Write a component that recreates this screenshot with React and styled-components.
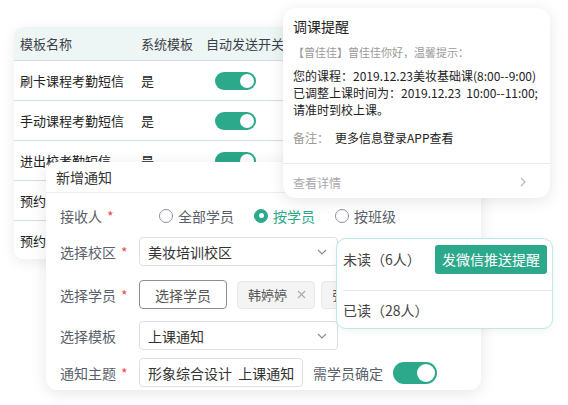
import React from "react";
import styled, { createGlobalStyle } from "styled-components";

const GREEN = "#2ca88a";

const Global = createGlobalStyle`
  html, body { margin: 0; padding: 0; background: #fff; }
  body { font-family: "Noto Sans CJK SC", "Noto Sans", sans-serif; color: #333; }
  * { box-sizing: border-box; }
`;

const Stage = styled.div`
  position: relative;
  width: 568px;
  height: 405px;
  overflow: hidden;
  background: #fff;
`;

/* ---------- template table card ---------- */
const TableCard = styled.div`
  position: absolute;
  left: 14px;
  top: 27px;
  width: 300px;
  border-radius: 9px;
  background: #fff;
  overflow: hidden;
  box-shadow: 0 3px 14px rgba(0, 0, 0, 0.08);
`;

const TRow = styled.div`
  display: grid;
  grid-template-columns: 121px 65px 1fr;
  align-items: center;
  padding-left: 6px;
  height: ${(p) => (p.$head ? 34 : p.$last ? 38 : 40)}px;
  background: ${(p) => (p.$head ? "#eef6f5" : "#fff")};
  border-bottom: ${(p) => (p.$last ? "none" : "1px solid #d6ddea")};
  font-size: 13px;
  color: ${(p) => (p.$head ? "#3a3f4a" : "#222")};
  white-space: nowrap;
`;

const Cell = styled.div`
  overflow: visible;
`;

const Switch = styled.div`
  position: relative;
  width: ${(p) => (p.$big ? 44 : 41)}px;
  height: ${(p) => (p.$big ? 22 : 18)}px;
  border-radius: 12px;
  background: ${GREEN};
  margin-left: ${(p) => p.$ml || 0}px;
  flex: none;
  &::after {
    content: "";
    position: absolute;
    top: 2px;
    right: 2px;
    width: ${(p) => (p.$big ? 18 : 14)}px;
    height: ${(p) => (p.$big ? 18 : 14)}px;
    border-radius: 50%;
    background: #fff;
  }
`;

/* ---------- notice card ---------- */
const NoticeCard = styled.div`
  position: absolute;
  left: 283px;
  top: 8px;
  width: 267px;
  height: 190px;
  border-radius: 13px;
  background: #fff;
  box-shadow: 0 3px 16px rgba(0, 0, 0, 0.1);
  display: flex;
  flex-direction: column;
  z-index: 2;
`;

const NoticeBody = styled.div`
  padding: 8px 10px 0;
  height: 155px;
`;

const NoticeTitle = styled.div`
  font-size: 14px;
  line-height: 20px;
  color: #222;
`;

const Greeting = styled.div`
  margin-top: 8px;
  font-size: 11px;
  line-height: 17px;
  color: #9a9a9a;
  white-space: nowrap;
`;

const Message = styled.div`
  margin-top: 6px;
  font-size: 12px;
  line-height: 17px;
  color: #222;
  white-space: pre;
`;

const Remark = styled.div`
  margin-top: 11px;
  display: flex;
  font-size: 12px;
  line-height: 17px;
  color: #222;
`;

const RemarkLabel = styled.span`
  color: #9a9a9a;
  width: 42px;
`;

const NoticeFooter = styled.div`
  flex: 1;
  border-top: 1px solid #ececec;
  display: flex;
  align-items: center;
  justify-content: space-between;
  padding: 2px 24px 0 10px;
  font-size: 12px;
  color: #a8a8a8;
`;

/* ---------- new notification card ---------- */
const FormCard = styled.div`
  position: absolute;
  left: 46px;
  top: 162px;
  width: 435px;
  height: 228px;
  border-radius: 11px;
  background: #fff;
  box-shadow: 0 3px 16px rgba(0, 0, 0, 0.1);
  z-index: 1;
`;

const FormHeader = styled.div`
  height: 31px;
  padding: 0 10px;
  display: flex;
  align-items: center;
  font-size: 14px;
  color: #333;
  border-bottom: 1px solid #eeeeee;
`;

const FormBody = styled.div`
  padding: 8px 0 0 14px;
`;

const FormRow = styled.div`
  display: flex;
  align-items: center;
  height: 29px;
  margin-top: ${(p) => p.$mt || 0}px;
  font-size: 14px;
  white-space: nowrap;
`;

const Label = styled.div`
  width: 79px;
  flex: none;
  display: flex;
  gap: 5px;
  color: #5a5f6b;
`;

const Req = styled.span`
  color: #f04b4b;
`;

const RadioGroup = styled.div`
  display: flex;
  gap: 20px;
  margin-left: 20px;
`;

const RadioItem = styled.label`
  display: flex;
  align-items: center;
  gap: 5px;
  color: ${(p) => (p.$on ? GREEN : "#5a5f6b")};
`;

const RadioDot = styled.span`
  width: 14px;
  height: 14px;
  border-radius: 50%;
  border: 1px solid ${(p) => (p.$on ? GREEN : "#8a8f99")};
  background: ${(p) => (p.$on ? GREEN : "#fff")};
  display: flex;
  align-items: center;
  justify-content: center;
  &::after {
    content: "";
    width: 5px;
    height: 5px;
    border-radius: 50%;
    background: ${(p) => (p.$on ? "#fff" : "transparent")};
  }
`;

const Select = styled.div`
  width: 199px;
  height: 29px;
  border: 1px solid #dcdfe6;
  border-radius: 4px;
  padding: 0 10px 0 8px;
  display: flex;
  align-items: center;
  justify-content: space-between;
  color: #333;
`;

const OutlineButton = styled.div`
  width: 88px;
  height: 29px;
  border: 1px solid #8d8d8d;
  border-radius: 4px;
  display: flex;
  align-items: center;
  justify-content: center;
  color: #555;
`;

const Tag = styled.div`
  height: 28px;
  margin-left: ${(p) => p.$ml}px;
  padding: 0 8px 0 10px;
  display: flex;
  align-items: center;
  gap: 10px;
  background: #f4f4f5;
  border: 1px solid #e9e9eb;
  border-radius: 4px;
  font-size: 13px;
  color: #555;
`;

const Input = styled.div`
  width: 164px;
  height: 29px;
  border: 1px solid #dcdfe6;
  border-radius: 4px;
  padding: 0 8px;
  display: flex;
  align-items: center;
  color: #333;
  overflow: hidden;
  white-space: pre;
`;

const InlineText = styled.span`
  margin: 0 10px;
  color: #5a5f6b;
`;

/* ---------- read stats card ---------- */
const StatsCard = styled.div`
  position: absolute;
  left: 336px;
  top: 238px;
  width: 217px;
  height: 91px;
  border: 1px solid #b8ebe4;
  border-radius: 10px;
  background: #fff;
  box-shadow: 0 2px 8px rgba(0, 0, 0, 0.05);
  z-index: 3;
  display: flex;
  flex-direction: column;
`;

const StatsTop = styled.div`
  height: 51px;
  padding: 6px 5px 0 6px;
  display: flex;
  align-items: flex-start;
  justify-content: space-between;
  font-size: 14px;
  line-height: 29px;
  color: #444;
`;

const StatsBottom = styled.div`
  flex: 1;
  margin-left: 6px;
  border-top: 1px solid #e6e6e6;
  display: flex;
  align-items: center;
  font-size: 14px;
  color: #444;
`;

const PushButton = styled.div`
  width: 112px;
  height: 29px;
  border-radius: 3px;
  background: ${GREEN};
  color: #fff;
  font-size: 14px;
  display: flex;
  align-items: center;
  justify-content: center;
`;

const Chevron = () => (
  <svg width="10" height="6" viewBox="0 0 10 6" fill="none">
    <path d="M1 1l4 4 4-4" stroke="#8a8f99" strokeWidth="1.2" />
  </svg>
);

const ChevronRight = () => (
  <svg width="6" height="10" viewBox="0 0 6 10" fill="none">
    <path d="M1 1l4 4-4 4" stroke="#b5b5b5" strokeWidth="1.1" />
  </svg>
);

const CloseX = () => (
  <svg width="9" height="9" viewBox="0 0 9 9" fill="none">
    <path d="M1 1l7 7M8 1l-7 7" stroke="#a9a9a9" strokeWidth="1.1" />
  </svg>
);

const rows = [
  { name: "刷卡课程考勤短信", sys: "是" },
  { name: "手动课程考勤短信", sys: "是" },
  { name: "进出校考勤短信", sys: "是" },
  { name: "预约上课提醒短信", sys: "是" },
  { name: "预约取消提醒短信", sys: "是" },
];

export default function App() {
  return (
    <>
      <Global />
      <Stage>
        <TableCard>
          <TRow $head>
            <Cell>模板名称</Cell>
            <Cell>系统模板</Cell>
            <Cell>自动发送开关</Cell>
          </TRow>
          {rows.map((r, i) => (
            <TRow key={r.name} $last={i === rows.length - 1}>
              <Cell>{r.name}</Cell>
              <Cell>{r.sys}</Cell>
              <Cell>
                <Switch $ml={9} />
              </Cell>
            </TRow>
          ))}
        </TableCard>

        <NoticeCard>
          <NoticeBody>
            <NoticeTitle>调课提醒</NoticeTitle>
            <Greeting>【曾佳佳】曾佳佳你好，温馨提示：</Greeting>
            <Message>
              {"您的课程：2019.12.23美妆基础课(8:00--9:00)\n已调整上课时间为：2019.12.23  10:00--11:00;\n请准时到校上课。"}
            </Message>
            <Remark>
              <RemarkLabel>备注：</RemarkLabel>
              <span>更多信息登录APP查看</span>
            </Remark>
          </NoticeBody>
          <NoticeFooter>
            <span>查看详情</span>
            <ChevronRight />
          </NoticeFooter>
        </NoticeCard>

        <FormCard>
          <FormHeader>新增通知</FormHeader>
          <FormBody>
            <FormRow>
              <Label>
                <span>接收人</span>
                <Req>*</Req>
              </Label>
              <RadioGroup>
                <RadioItem>
                  <RadioDot />
                  全部学员
                </RadioItem>
                <RadioItem $on>
                  <RadioDot $on />
                  按学员
                </RadioItem>
                <RadioItem>
                  <RadioDot />
                  按班级
                </RadioItem>
              </RadioGroup>
            </FormRow>
            <FormRow $mt={7}>
              <Label>
                <span>选择校区</span>
                <Req>*</Req>
              </Label>
              <Select>
                <span>美妆培训校区</span>
                <Chevron />
              </Select>
            </FormRow>
            <FormRow $mt={14}>
              <Label>
                <span>选择学员</span>
                <Req>*</Req>
              </Label>
              <OutlineButton>选择学员</OutlineButton>
              <Tag $ml={10}>
                <span>韩婷婷</span>
                <CloseX />
              </Tag>
              <Tag $ml={6}>
                <span>张丽丽</span>
                <CloseX />
              </Tag>
            </FormRow>
            <FormRow $mt={12}>
              <Label>
                <span>选择模板</span>
              </Label>
              <Select>
                <span>上课通知</span>
                <Chevron />
              </Select>
            </FormRow>
            <FormRow $mt={8}>
              <Label>
                <span>通知主题</span>
                <Req>*</Req>
              </Label>
              <Input>{"形象综合设计  上课通知"}</Input>
              <InlineText>需学员确定</InlineText>
              <Switch $big />
            </FormRow>
          </FormBody>
        </FormCard>

        <StatsCard>
          <StatsTop>
            <span>未读（6人）</span>
            <PushButton>发微信推送提醒</PushButton>
          </StatsTop>
          <StatsBottom>已读（28人）</StatsBottom>
        </StatsCard>
      </Stage>
    </>
  );
}
